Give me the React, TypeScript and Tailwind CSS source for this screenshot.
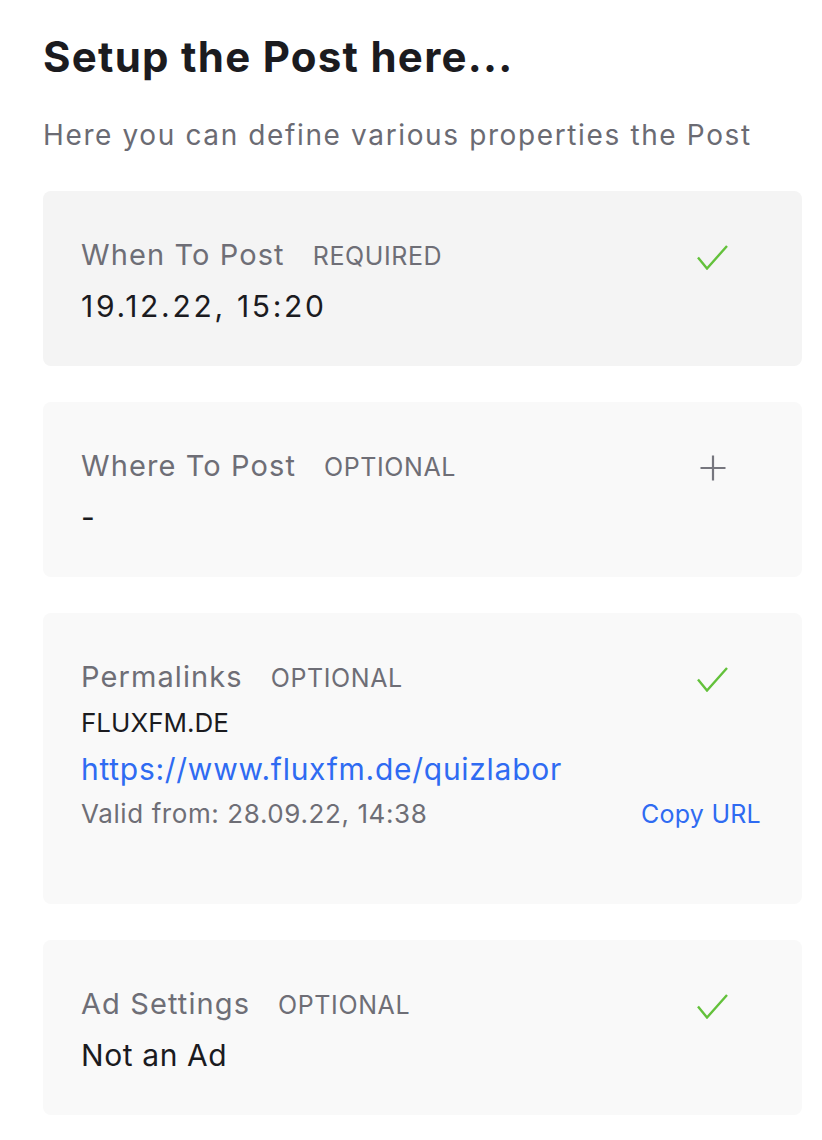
import { ReactNode } from 'react';

type Status = 'done' | 'add';

interface SectionCardProps {
  title: string;
  tag: string;
  status: Status;
  tone?: 'dark' | 'light';
  children: ReactNode;
}

const CheckIcon = () => (
  <svg width="31" height="25" viewBox="0 0 31 25" fill="none">
    <path d="M1 12.5 L10 23.5 L30 1" stroke="#63c13b" strokeWidth="2.4" strokeLinejoin="miter" />
  </svg>
);

const PlusIcon = () => (
  <svg width="26" height="26" viewBox="0 0 26 26" fill="none">
    <path d="M13 0.5 V25.5 M0.5 13 H25.5" stroke="#76767e" strokeWidth="2.2" />
  </svg>
);

const SectionCard = ({ title, tag, status, tone = 'light', children }: SectionCardProps) => (
  <div
    className={`rounded-[8px] pl-[38px] pr-[41px] pt-[46px] ${
      tone === 'dark' ? 'bg-[#f4f4f4]' : 'bg-[#f9f9f9]'
    }`}
  >
    <div className="flex items-center justify-between">
      <div className="flex items-baseline gap-[28px] leading-[36px]">
        <span className="text-[29px] tracking-[0.038em] text-[#6e6e76]">{title}</span>
        <span className="text-[25px] uppercase tracking-[0.024em] text-[#6e6e76]">{tag}</span>
      </div>
      <div className="mr-[33px] flex h-[36px] w-[31px] items-center justify-center pt-[3px]">
        {status === 'done' ? <CheckIcon /> : <PlusIcon />}
      </div>
    </div>
    {children}
  </div>
);

export default function App() {
  return (
    <div
      className="bg-white pl-[43px] pr-[20px] pt-[33px] pb-[25px]"
      style={{ fontFamily: 'Inter, "Noto Sans", sans-serif' }}
    >
      <h1 className="text-[42px] font-bold leading-[48px] tracking-[0.03em] text-[#1b1b1f]">
        Setup the Post here...
      </h1>
      <p className="mt-[36px] text-[28px] leading-[36px] tracking-[0.058em] text-[#6b6b73]">
        Here you can define various properties the Post
      </p>

      <div className="mt-[38px] flex flex-col gap-[36px]">
        <SectionCard title="When To Post" tag="Required" status="done" tone="dark">
          <div className="mt-[13px] pb-[41px] text-[30px] leading-[38px] tracking-[0.09em] text-[#1b1b1f]">
            19.12.22, 15:20
          </div>
        </SectionCard>

        <SectionCard title="Where To Post" tag="Optional" status="add">
          <div className="mt-[13px] pb-[41px] text-[30px] leading-[38px] text-[#1b1b1f]">-</div>
        </SectionCard>

        <SectionCard title="Permalinks" tag="Optional" status="done">
          <div className="pb-[73px]">
            <div className="mt-[10px] text-[26px] leading-[34px] text-[#1b1b1f]">FLUXFM.DE</div>
            <div className="mt-[10px] text-[30px] leading-[38px] tracking-[0.024em] text-[#2f6bf2]">
              https://www.fluxfm.de/quizlabor
            </div>
            <div className="mt-[9px] flex items-center justify-between text-[26px] leading-[34px]">
              <span className="tracking-[0.023em] text-[#6e6e76]">Valid from: 28.09.22, 14:38</span>
              <span className="text-[25px] tracking-[0.01em] text-[#2f6bf2]">Copy URL</span>
            </div>
          </div>
        </SectionCard>

        <SectionCard title="Ad Settings" tag="Optional" status="done">
          <div className="mt-[13px] pb-[41px] text-[30px] leading-[38px] tracking-[0.02em] text-[#1b1b1f]">
            Not an Ad
          </div>
        </SectionCard>
      </div>
    </div>
  );
}
